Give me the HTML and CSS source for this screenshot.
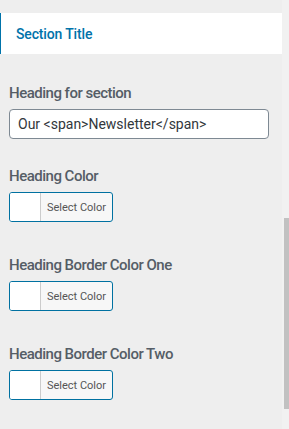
FILE: index.html
```html
<!DOCTYPE html>
<html>
<head>
    <title>Section Settings</title>
    <link rel="stylesheet" href="styles.css">
</head>
<body>
  <div class="frame">
    <div class="panel">
      <div class="section-title">Section Title</div>

      <div class="field first">
        <label class="field-label" for="heading">Heading for section</label>
        <input type="text" id="heading" class="text-input" value="Our <span>Newsletter</span>">
      </div>

      <div class="field after-input">
        <div class="field-label">Heading Color</div>
        <button class="color-btn"><span class="swatch"></span><span class="color-text">Select Color</span></button>
      </div>

      <div class="field">
        <div class="field-label">Heading Border Color One</div>
        <button class="color-btn"><span class="swatch"></span><span class="color-text">Select Color</span></button>
      </div>

      <div class="field">
        <div class="field-label">Heading Border Color Two</div>
        <button class="color-btn"><span class="swatch"></span><span class="color-text">Select Color</span></button>
      </div>
    </div>
    <div class="scroll-track">
      <div class="scroll-thumb"></div>
    </div>
  </div>
</body>
</html>
```

FILE: styles.css
```css
body {
    margin: 0;
    background: #eeeeee;
    font-family: Roboto, "Liberation Sans", sans-serif;
}

.frame {
    display: flex;
    height: 429px;
    overflow: hidden;
}

.panel {
    flex: 1;
    padding-top: 13px;
}

.section-title {
    background: #fff;
    border-left: 1px solid #0073aa;
    height: 41px;
    padding-left: 15px;
    display: flex;
    align-items: center;
    font-size: 14px;
    font-weight: 500;
    letter-spacing: -0.15px;
    color: #0073aa;
}

.field {
    padding: 0 13px 0 9px;
    margin-top: 33px;
}

.field.first {
    margin-top: 29px;
}

.field.after-input {
    margin-top: 27px;
}

.field-label {
    display: block;
    font-size: 15px;
    font-weight: 500;
    letter-spacing: -0.5px;
    line-height: 20px;
    color: #555d66;
    margin-bottom: 6px;
}

.text-input {
    box-sizing: border-box;
    width: 260px;
    height: 30px;
    margin: 0;
    padding: 0 8px;
    border: 1px solid #7e8993;
    border-radius: 4px;
    background: #fff;
    font-family: Roboto, "Liberation Sans", sans-serif;
    font-size: 14px;
    color: #32373c;
    display: block;
}

.color-btn {
    display: flex;
    box-sizing: border-box;
    width: 104px;
    height: 30px;
    padding: 0;
    margin: 0;
    border: 1px solid #0071a1;
    border-radius: 3px;
    background: #f7f7f7;
    overflow: hidden;
    cursor: pointer;
}

.swatch {
    width: 30px;
    height: 100%;
    background: #fff;
    border-right: 1px solid #ccc;
}

.color-text {
    flex: 1;
    align-self: center;
    text-align: center;
    font-family: Roboto, "Liberation Sans", sans-serif;
    font-size: 11px;
    color: #555;
}

.scroll-track {
    width: 8px;
    background: #f1f1f1;
    padding-top: 218px;
    box-sizing: border-box;
}

.scroll-thumb {
    margin-left: 2px;
    height: 191px;
    background: #c1c1c1;
}
```
